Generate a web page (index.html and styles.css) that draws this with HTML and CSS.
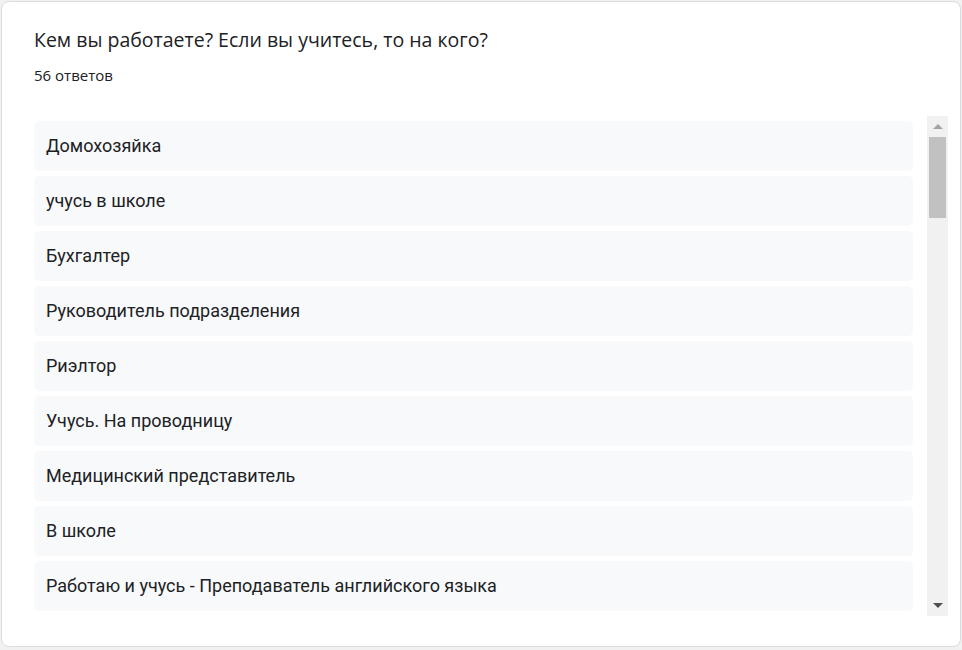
FILE: index.html
```html
<!DOCTYPE html>
<html lang="ru">
<head>
<meta charset="utf-8">
<title>Ответы</title>
<link rel="stylesheet" href="styles.css">
</head>
<body>
<div class="card">
  <div class="title">Кем вы работаете? Если вы учитесь, то на кого?</div>
  <div class="count">56 ответов</div>
  <div class="answers">
    <div class="list">
      <div class="item">Домохозяйка</div>
      <div class="item">учусь в школе</div>
      <div class="item">Бухгалтер</div>
      <div class="item">Руководитель подразделения</div>
      <div class="item">Риэлтор</div>
      <div class="item">Учусь. На проводницу</div>
      <div class="item">Медицинский представитель</div>
      <div class="item">В школе</div>
      <div class="item">Работаю и учусь - Преподаватель английского языка</div>
    </div>
    <div class="scrollbar">
      <div class="sb-btn"><span class="arrow-up"></span></div>
      <div class="sb-thumb"></div>
      <div class="sb-space"></div>
      <div class="sb-btn"><span class="arrow-down"></span></div>
    </div>
  </div>
</div>
</body>
</html>
```
FILE: styles.css
```css
html, body {
  margin: 0;
  padding: 0;
}
body {
  background: #f1f1f1;
  padding: 1px 1px 3px 1px;
  font-family: Roboto, "Liberation Sans", sans-serif;
  color: #202124;
}
.card {
  box-sizing: border-box;
  height: 646px;
  background: #fff;
  border: 1px solid #dadce0;
  border-radius: 8px;
  padding: 25px 12px 0 32px;
}
.title {
  font-family: "Open Sans", Roboto, sans-serif;
  font-size: 19.5px;
  line-height: 26px;
}
.count {
  font-family: "Open Sans", Roboto, sans-serif;
  font-size: 15px;
  line-height: 20px;
  margin-top: 12px;
}
.answers {
  display: flex;
  margin-top: 31px;
  height: 500px;
}
.list {
  flex: 1;
  display: flex;
  flex-direction: column;
  gap: 5px;
  padding-top: 5px;
  margin-right: 14px;
  overflow: hidden;
}
.item {
  flex: none;
  height: 50px;
  box-sizing: border-box;
  background: #f8f9fa;
  border-radius: 5px;
  padding: 0 0 2px 12px;
  display: flex;
  align-items: center;
  font-size: 18px;
}
.scrollbar {
  width: 21px;
  background: #f1f1f1;
  display: flex;
  flex-direction: column;
}
.sb-btn {
  height: 21px;
  display: flex;
  align-items: center;
  justify-content: center;
}
.sb-thumb {
  height: 81px;
  margin: 0 2px;
  background: #c1c1c1;
}
.sb-space {
  flex: 1;
}
.arrow-up {
  width: 0;
  height: 0;
  border-left: 5px solid transparent;
  border-right: 5px solid transparent;
  border-bottom: 5px solid #a3a3a3;
}
.arrow-down {
  width: 0;
  height: 0;
  border-left: 5px solid transparent;
  border-right: 5px solid transparent;
  border-top: 5px solid #505050;
}
```
